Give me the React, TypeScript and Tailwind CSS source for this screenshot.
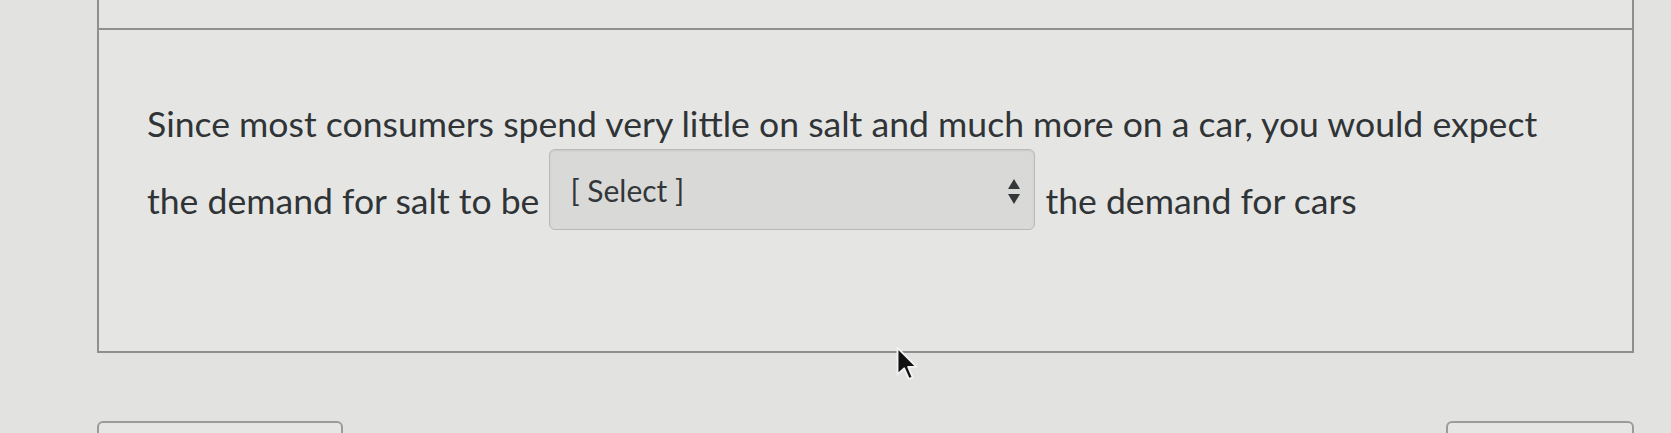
const Cursor = () => (
  <svg
    className="absolute left-[895px] top-[346px]"
    width="24"
    height="36"
    viewBox="0 0 12 19"
  >
    <path
      d="M1 1 L1 15 L4.5 11.8 L7 17.5 L9 16.6 L6.6 11 L11 11 Z"
      fill="#111"
      stroke="#f2f2f2"
      strokeWidth="1"
      strokeLinejoin="round"
    />
  </svg>
);

const SelectBox = () => (
  <div className="relative mx-[10px] h-[81px] w-[486px] shrink-0 rounded-[6px] border border-[#b8bab9] bg-[#d9dad8] shadow-[inset_0_1px_2px_rgba(0,0,0,0.08)]">
    <span className="absolute left-[20px] top-[22px] text-[30px] leading-[36px] text-[#33373a]">
      [ Select ]
    </span>
    <svg
      className="absolute right-[13px] top-[28px]"
      width="14"
      height="28"
      viewBox="0 0 14 28"
    >
      <path d="M7 1 L13 11 L1 11 Z" fill="#34383b" />
      <path d="M1 16 L13 16 L7 26 Z" fill="#34383b" />
    </svg>
  </div>
);

export default function App() {
  return (
    <div className="relative h-[433px] w-full overflow-hidden bg-[#e2e3e1] font-['Lato','Noto_Sans',sans-serif] text-[#303437]">
      <div className="ml-[97px] w-[1537px] border-x-2 border-b-2 border-[#8e9090] bg-[#e5e6e4]">
        <div className="h-[30px] border-b-2 border-[#8e9090]" />
        <div className="h-[321px] pl-[48px] pt-[73px] text-[35.6px] leading-[41px]">
          <div>
            Since most consumers spend very little on salt and much more on a
            car, you would expect
          </div>
          <div className="mt-[5px] flex items-start">
            <span className="mt-[31px]">the demand for salt to be</span>
            <SelectBox />
            <span className="mt-[31px]">the demand for cars</span>
          </div>
        </div>
      </div>
      <div className="mt-[68px] flex justify-between pl-[97px] pr-[37px]">
        <div className="h-[40px] w-[246px] rounded-[6px] border-2 border-[#9a9c9c] bg-[#e6e7e5]" />
        <div className="h-[40px] w-[188px] rounded-[6px] border-2 border-[#9a9c9c] bg-[#e6e7e5]" />
      </div>
      <Cursor />
    </div>
  );
}
